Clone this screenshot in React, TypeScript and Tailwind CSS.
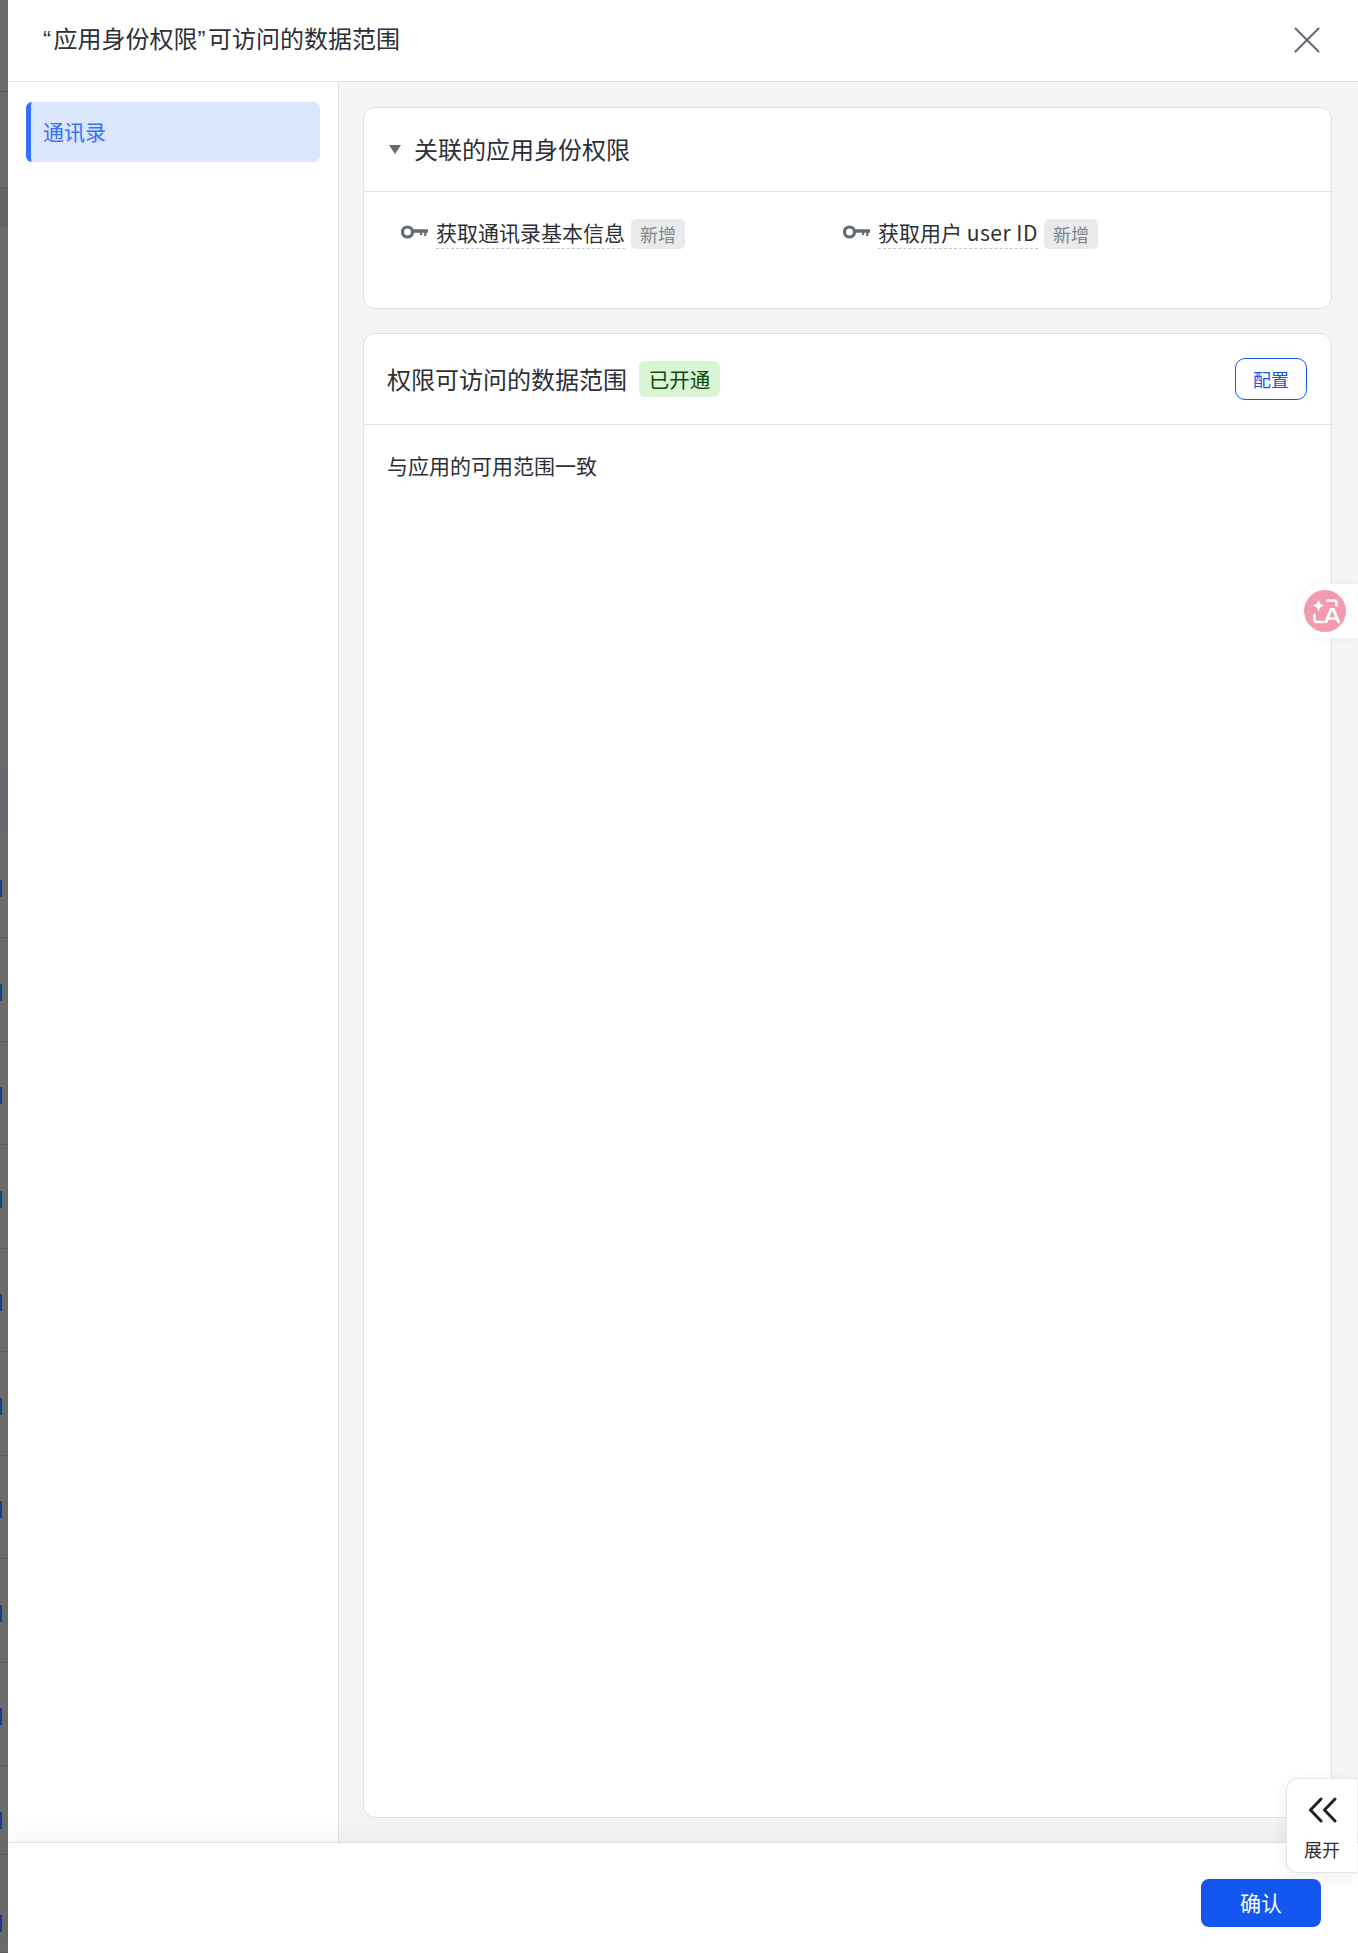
import type { ReactNode } from "react";
import { X } from "lucide-react";

const cjk = '"Noto Sans CJK SC", "Noto Sans", sans-serif';

function KeyIcon() {
  return (
    <svg width="27" height="14" viewBox="0 0 27 14" fill="none" className="shrink-0">
      <circle cx="6.5" cy="7" r="5" stroke="#646a73" strokeWidth="3.2" />
      <path d="M11 4.2H27V7.8H25.4V11H23.2V7.8H21.2V10H19V7.8H11Z" fill="#646a73" />
    </svg>
  );
}

function Permission({ label }: { label: ReactNode }) {
  return (
    <div className="flex items-center w-[442px]">
      <span className="mr-2 -mt-[5px]">
        <KeyIcon />
      </span>
      <span className="text-[21px] leading-[24px] text-[#2b2f36] border-b border-dashed border-[#c4c7cc] h-[29px]">
        {label}
      </span>
      <span className="ml-[6px] h-[30px] px-[9px] flex items-center rounded-[5px] bg-[#e8eaeb] text-[#7f858d] text-[18px]">
        新增
      </span>
    </div>
  );
}

// the page behind the drawer, seen as a dimmed strip on the left
function BackdropStrip() {
  const rows = [103.5, 103.5, 103.5, 103.5, 103.5, 103.5, 103.5, 103.5, 103.5, 89, 98];
  return (
    <div className="w-2 shrink-0 bg-[#6b6b6b] overflow-hidden">
      <div className="h-[92px] border-b border-[#5d5d5d]" />
      <div className="h-[96px] border-b border-[#5d5d5d]" />
      <div className="h-[38px] border-b border-[#5d5d5d] bg-[#646464]" />
      <div className="h-[540px]" />
      <div className="h-[68.5px] bg-[#666a6e]" />
      {rows.map((h, i) => (
        <div key={i} className="border-b border-[#5d5d5d]" style={{ height: h, paddingTop: i === 10 ? 60 : 45.5 }}>
          <div className="w-[2px] h-[17px] bg-[#153f8f]" />
        </div>
      ))}
    </div>
  );
}

export default function App() {
  return (
    <div className="relative flex w-[1358px] h-[1953px] overflow-hidden bg-white" style={{ fontFamily: cjk }}>
      <BackdropStrip />

      <div className="flex-1 flex flex-col min-w-0">
        {/* Header */}
        <div className="h-[82px] shrink-0 flex items-center justify-between pl-[35px] pr-[28px] border-b border-[#dee0e3]">
          <h1 className="text-[24px] text-[#2b2f36] font-normal -mt-1">
            <span className="font-['Liberation_Sans'] mr-[2.5px]">“</span>应用身份权限<span className="font-['Liberation_Sans'] mr-[2.5px]">”</span>可访问的数据范围
          </h1>
          <X className="w-[46px] h-[46px] text-[#646a73] -mt-[2px]" strokeWidth={1.1} />
        </div>

        <div className="flex-1 flex min-h-0">
          {/* Sidebar */}
          <div className="w-[331px] shrink-0 border-r border-[#dee0e3] pt-5 pl-[18px] pr-[18px]">
            <div className="h-[60px] flex items-center rounded-[6px] bg-[#dbe6fd] border-l-[5px] border-[#3370ff] pl-[12px] text-[21px] text-[#3370ff]">
              通讯录
            </div>
          </div>

          {/* Main */}
          <div className="flex-1 bg-[#f4f5f7] pt-[25px] pb-[24px] pl-[24px] pr-[26px] flex flex-col gap-[24px] min-w-0">
            <section className="h-[202px] shrink-0 bg-white border border-[#dee0e3] rounded-[12px]">
              <div className="h-[84px] flex items-center pl-[25px] border-b border-[#dee0e3]">
                <span className="mr-[13px] w-0 h-0 border-l-[6px] border-r-[6px] border-t-[9px] border-l-transparent border-r-transparent border-t-[#646a73]" />
                <h2 className="text-[24px] text-[#2b2f36] font-normal -mt-[2px]">关联的应用身份权限</h2>
              </div>
              <div className="flex pl-[37px] pt-[27px]">
                <Permission label="获取通讯录基本信息" />
                <Permission
                  label={
                    <>
                      获取用户 <span className="tracking-[0.5px]">user ID</span>
                    </>
                  }
                />
              </div>
            </section>

            <section className="flex-1 bg-white border border-[#dee0e3] rounded-[12px]">
              <div className="h-[91px] flex items-center pl-[23px] pr-[24px] border-b border-[#dee0e3]">
                <h2 className="text-[24px] text-[#2b2f36] font-normal">权限可访问的数据范围</h2>
                <span className="ml-[12px] h-9 w-[81px] flex items-center justify-center rounded-[6px] bg-[#d9f5d6] text-[20.5px] text-[#0b4a0b]">
                  已开通
                </span>
                <button className="ml-auto w-[72px] h-[42px] rounded-[10px] border border-[#1456f0] text-[18px] text-[#1456f0]">
                  配置
                </button>
              </div>
              <p className="pl-[23px] pt-[24px] text-[21px] leading-[32px] text-[#2b2f36]">与应用的可用范围一致</p>
            </section>
          </div>
        </div>

        {/* Footer */}
        <div className="relative h-[111px] shrink-0 bg-white border-t border-[#dee0e3] flex items-start justify-end pt-[36px] pr-[37px] shadow-[0_-6px_24px_rgba(0,0,0,0.05)]">
          <button className="w-[120px] h-[48px] rounded-[8px] bg-[#1456f0] text-white text-[21px]">确认</button>
        </div>
      </div>

      {/* Floating translate button */}
      <div className="absolute right-0 top-[584px] w-[61px] h-[54px] rounded-l-[27px] bg-white/90 shadow-[0_0_10px_rgba(0,0,0,0.05)] flex items-center pl-[7px]">
        <svg width="42" height="42" viewBox="0 0 42 42">
          <circle cx="21" cy="21" r="21" fill="#f19ab0" />
          <path d="M14.5 9C15.3 13.4 16.6 14.7 21 15.5C16.6 16.3 15.3 17.6 14.5 22C13.7 17.6 12.4 16.3 8 15.5C12.4 14.7 13.7 13.4 14.5 9Z" fill="#fff" />
          <path d="M23 10.5H30C31.5 10.5 32.5 11.5 32.5 13V15.5" stroke="#fff" strokeWidth="2.6" fill="none" strokeLinecap="round" />
          <path d="M10.5 25V29C10.5 30.7 11.5 32 13 32H19" stroke="#fff" strokeWidth="2.6" fill="none" strokeLinecap="round" />
          <path d="M21.5 33L27 19.5H29.5L35 33" stroke="#fff" strokeWidth="3" fill="none" />
          <path d="M24 28.5H32.5" stroke="#fff" strokeWidth="2.6" />
        </svg>
      </div>

      {/* Floating expand button */}
      <div className="absolute right-[1px] top-[1778px] w-[71px] h-[95px] rounded-l-[12px] bg-white border border-r-0 border-[#e4e6e9] shadow-[0_4px_16px_rgba(0,0,0,0.07)] flex flex-col items-center pt-[18px]">
        <svg width="29" height="26" viewBox="0 0 29 26" fill="none" stroke="#1f2329" strokeWidth="3" strokeLinecap="round" strokeLinejoin="round">
          <path d="M13 2L2.5 13L13 24" />
          <path d="M27 2L16.5 13L27 24" />
        </svg>
        <span className="mt-[14px] text-[18px] leading-[24px] text-[#2b2f36]">展开</span>
      </div>
    </div>
  );
}
